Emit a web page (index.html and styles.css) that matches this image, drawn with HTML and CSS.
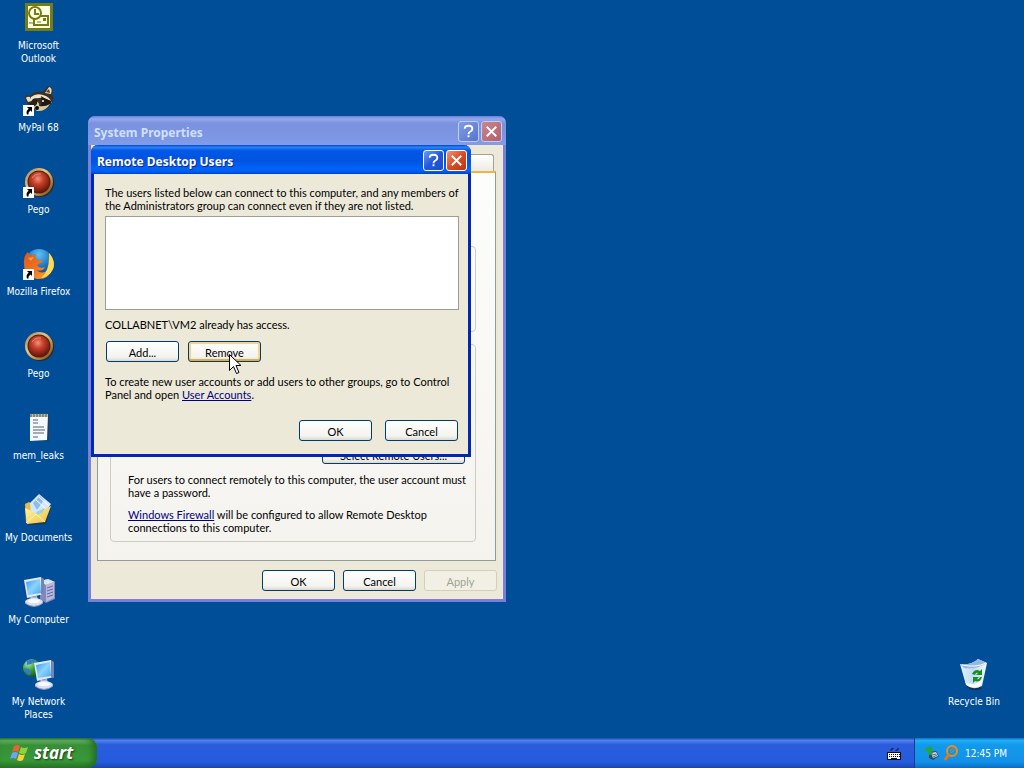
FILE: index.html
```html
<!DOCTYPE html>
<html lang="en">
<head>
<meta charset="utf-8">
<title>Desktop</title>
<link rel="stylesheet" href="styles.css">
</head>
<body>
<svg class="defs" aria-hidden="true">
  <defs>
    <radialGradient id="gem" cx=".45" cy=".35" r=".65"><stop offset="0" stop-color="#f0917a"/><stop offset=".4" stop-color="#c8412c"/><stop offset="1" stop-color="#681508"/></radialGradient>
    <linearGradient id="ring" x1="0" y1="0" x2="1" y2="1"><stop offset="0" stop-color="#9a8058"/><stop offset=".4" stop-color="#e8c885"/><stop offset=".7" stop-color="#b88848"/><stop offset="1" stop-color="#54381c"/></linearGradient>
    <linearGradient id="screen" x1="0" y1="0" x2="1" y2="1"><stop offset="0" stop-color="#3d94ee"/><stop offset=".5" stop-color="#8ad4fc"/><stop offset="1" stop-color="#48a4ee"/></linearGradient>
    <linearGradient id="fox" x1="0" y1="0" x2="1" y2="1"><stop offset="0" stop-color="#e0541c"/><stop offset=".5" stop-color="#ee7420"/><stop offset="1" stop-color="#ffb028"/></linearGradient>
    <radialGradient id="globe" cx=".5" cy=".2" r=".8"><stop offset="0" stop-color="#5cc4f0"/><stop offset=".6" stop-color="#1c6cc0"/><stop offset="1" stop-color="#123c88"/></radialGradient>
    <radialGradient id="earth" cx=".3" cy=".25" r=".8"><stop offset="0" stop-color="#a4e8b0"/><stop offset=".5" stop-color="#38a038"/><stop offset="1" stop-color="#145018"/></radialGradient>
    <linearGradient id="folder" x1="0" y1="0" x2="1" y2="1"><stop offset="0" stop-color="#fff4a8"/><stop offset="1" stop-color="#ecc040"/></linearGradient>
    <linearGradient id="bin" x1="0" y1="0" x2="1" y2="0"><stop offset="0" stop-color="#e4f2fa"/><stop offset=".5" stop-color="#c0dcf2"/><stop offset="1" stop-color="#f4fafe"/></linearGradient>
    <g id="shortcut"><path d="M0 21h11v11H0z" fill="#fff"/><path d="M4 23h5v5L7.500 26.500Q5 28 5.500 30.500L4 30.500Q2.500 27 5.700 24.700z" fill="#000"/></g>
    <g id="pego"><circle cx="17" cy="17" r="14" fill="#302818"/><circle cx="16" cy="16" r="14" fill="url(#ring)"/><circle cx="16" cy="16" r="11.500" fill="#542010"/><circle cx="16" cy="16" r="10.500" fill="url(#gem)"/><path d="M9 12Q12 7 18 8" fill="none" stroke="#f8b8a0" stroke-opacity=".6"/></g>
    <g id="monitor"><path d="M1 3L18 0L21 17L4 21z" fill="#e4e8f4"/><path d="M18 0L21 2V18L18 17z" fill="#7284b8"/><path d="M3 5L17 2L18 16L5 18z" fill="url(#screen)"/><path d="M7 20l7-1 1 4-6 1z" fill="#b0b8cc"/><ellipse cx="11" cy="25" rx="9" ry="4" fill="#dce0ec"/><ellipse cx="11" cy="24" rx="6" ry="2" fill="#f8faff"/><path d="M2 26q9 7 18 0" fill="none" stroke="#9298c0"/></g>
  </defs>
</svg>

<main class="desktop">
  <nav class="shortcuts" aria-label="Desktop icons">
    <a class="shortcut" href="#"><svg viewBox="0 0 32 32"><path d="M2 1h28v28H2z" fill="#767c10"/><path d="M5 4h22v22H5z" fill="#fffee6"/><path d="M11 14h14v9H11z" fill="#fffee6" stroke="#767c10" stroke-width="2"/><circle cx="12" cy="11" r="6" fill="#fffee6" stroke="#767c10" stroke-width="2"/><path d="M12 7v5h4" fill="none" stroke="#767c10" stroke-width="2"/><path d="M20 16h3v3h-3z" fill="#767c10"/><path d="M14 20h4M6 21h4" stroke="#767c10" stroke-width="1"/></svg><span>Microsoft<br>Outlook</span></a>
    <a class="shortcut" href="#"><svg viewBox="0 0 32 32"><path d="M2 14Q2 10 7 12Q12 6 20 8L25 2Q31 2 29 10Q32 15 28 20Q21 29 12 26Q4 22 2 14z" fill="#3c3024"/><path d="M3 14Q4 12 7 13L9 17L5 18zM22 9L26 3Q30 4 28 10z" fill="#e4ddc4"/><path d="M23 8l3-3 1 4z" fill="#54402c"/><path d="M8 13Q14 8 23 12Q28 15 29 19Q23 13 16 14Q11 14 8 19z" fill="#ece5cc"/><path d="M18 12Q23 16 29 17Q25 24 16 24Q20 19 18 12z" fill="#201812"/><path d="M12 17Q17 18 16 22Q22 23 27 20Q22 28 14 27Q9 24 12 17z" fill="#d9c69c"/><path d="M10 15Q15 12 14 20Q10 25 6 20z" fill="#28201a"/><circle cx="14" cy="24" r="2" fill="#080808"/><circle cx="20" cy="17" r="1" fill="#fff"/><use href="#shortcut"/></svg><span>MyPal 68</span></a>
    <a class="shortcut" href="#"><svg viewBox="0 0 32 32"><use href="#pego"/><use href="#shortcut"/></svg><span>Pego</span></a>
    <a class="shortcut" href="#"><svg viewBox="0 0 32 32"><circle cx="16" cy="15" r="14" fill="url(#globe)"/><path d="M26 5Q33 13 30 21Q25 32 14 31Q1 28 1 16Q0 8 5 4L7 8L13 6Q11 10 15 12Q20 12 19 14L14 17Q16 21 22 19Q20 24 13 22Q21 28 26 20Q29 13 26 5z" fill="url(#fox)"/><path d="M26 5Q33 13 30 21Q26 29 18 30Q27 23 26 5z" fill="#ffdc50"/><path d="M5 10l6-1-3 4z" fill="#f8a03c"/><use href="#shortcut"/></svg><span>Mozilla Firefox</span></a>
    <a class="shortcut" href="#"><svg viewBox="0 0 32 32"><use href="#pego"/></svg><span>Pego</span></a>
    <a class="shortcut" href="#"><svg viewBox="0 0 32 32"><path d="M8 4l18-1v26H8z" fill="#203c64"/><path d="M7 3h18l-1 25-17 1z" fill="#f6f9fc"/><path d="M7 2h18v3H7z" fill="#b8bfae"/><path d="M8 1v4m3-4v4m3-4v4m3-4v4m3-4v4m3-4v4" stroke="#56563c"/><path d="M10 8h5m-5 3h5m-5 4h11m-11 3h12m-12 3h11m-11 4h5" stroke="#506078"/></svg><span>mem_leaks</span></a>
    <a class="shortcut" href="#"><svg viewBox="0 0 32 32"><path d="M3 11l4-2 4 2 17 2-5 17-18 1z" fill="#23374b"/><path d="M2 10l4-2 3 2 14 3v12L3 29z" fill="#e6bc48"/><path d="M7 9l9-9 12 10-9 13-11-3z" fill="#d4e8fc"/><path d="M10 9l7-7 4 4-7 10z" fill="#8cbcf0"/><path d="M16 3l9 8M13 6l10 9" stroke="#fff"/><path d="M2 14l11 5 15-7-6 16-18 2z" fill="url(#folder)"/><path d="M13 18l9-4-3 5-5 2z" fill="#9cd4da"/><path d="M3 29l10-9 9 8" fill="none" stroke="#fff2ac"/></svg><span>My Documents</span></a>
    <a class="shortcut" href="#"><svg viewBox="0 0 32 32"><path d="M17 5l8-2 7 3v17l-9 4-6-4z" fill="#8488b8"/><path d="M17 5l8-2 7 3-9 3z" fill="#dce2f2"/><path d="M23 9l8-3v16l-8 4z" fill="#b4b8dc"/><path d="M24 12l6-2m-6 5l6-2m-6 5l6-2m-6 5l6-2" stroke="#686ca0"/><use href="#monitor" y="1"/></svg><span>My Computer</span></a>
    <a class="shortcut" href="#"><svg viewBox="0 0 32 32"><circle cx="9" cy="10" r="9" fill="url(#earth)"/><path d="M4 3q6-3 9 0l-5 3-4 1zM1 10l5 1 2 5-3 1z" fill="#3878d0"/><use href="#monitor" x="10" y="2"/></svg><span>My Network<br>Places</span></a>
  </nav>

  <a class="shortcut recycle" href="#"><svg viewBox="0 0 32 32"><path d="M4 8l24-2-5 25q-9 3-14-2z" fill="#123058"/><path d="M2 6Q12 8 20 1l9 4-5 23q-9 5-16-1z" fill="url(#bin)"/><path d="M2 6Q12 8 20 1l9 4Q18 12 6 10z" fill="#92b9e4"/><path d="M4 7Q18 10 28 5" fill="none" stroke="#fff"/><path d="M7 24q8 5 17-2l-1 5q-8 5-14 0z" fill="#fff"/><path d="M14 16q3-6 8-3l2-2v6h-6l2-2q-2-1-3 2zM24 19q-2 6-7 4l-2 2v-6h6l-2 2q2 1 3-2z" fill="#189020"/></svg><span>Recycle Bin</span></a>

  <section class="window inactive properties" aria-label="System Properties">
    <header class="titlebar"><h1>System Properties</h1>
      <button class="caption" aria-label="Help"><svg viewBox="0 0 20 20"><path d="M6 7q0-3 4-3t4 3q0 2-2 3t-2 3" fill="none" stroke="currentColor" stroke-width="2"/><path d="M9 14h2v2H9z" fill="currentColor"/></svg></button>
      <button class="caption close" aria-label="Close"><svg viewBox="0 0 20 20"><path d="M5 5l10 10M15 5L5 15" stroke="currentColor" stroke-width="2"/></svg></button>
    </header>
    <div class="properties-body">
      <div class="tab-row"></div>
      <div class="tab-page">
        <div class="group assistance"></div>
        <div class="group remote">
          <button class="button select-users">Select Remote Users...</button>
          <p>For users to connect remotely to this computer, the user account must<br>have a password.</p>
          <p><a href="#">Windows Firewall</a> will be configured to allow Remote Desktop<br>connections to this computer.</p>
        </div>
      </div>
      <footer class="actions"><button class="button">OK</button><button class="button">Cancel</button><button class="button" disabled>Apply</button></footer>
    </div>
  </section>

  <section class="window users" role="dialog" aria-label="Remote Desktop Users">
    <header class="titlebar"><h2>Remote Desktop Users</h2>
      <button class="caption" aria-label="Help"><svg viewBox="0 0 20 20"><path d="M6 7q0-3 4-3t4 3q0 2-2 3t-2 3" fill="none" stroke="currentColor" stroke-width="2"/><path d="M9 14h2v2H9z" fill="currentColor"/></svg></button>
      <button class="caption close" aria-label="Close"><svg viewBox="0 0 20 20"><path d="M5 5l10 10M15 5L5 15" stroke="currentColor" stroke-width="2"/></svg></button>
    </header>
    <div class="users-body">
      <p>The users listed below can connect to this computer, and any members of<br>the Administrators group can connect even if they are not listed.</p>
      <div class="user-list" role="listbox" aria-label="Remote desktop users" tabindex="0"></div>
      <p class="access">COLLABNET\VM2 already has access.</p>
      <div class="edit-actions"><button class="button">Add...</button><button class="button hot">Remove</button></div>
      <p>To create new user accounts or add users to other groups, go to Control<br>Panel and open <a href="#">User Accounts</a>.</p>
      <footer class="dialog-actions"><button class="button">OK</button><button class="button">Cancel</button></footer>
    </div>
  </section>
  <svg class="pointer" viewBox="0 0 12 21" aria-hidden="true"><path d="M.500 .500v16l4-4 3 7 2.500-1-3-7h5z" fill="#fff" stroke="#000"/></svg>
</main>

<footer class="taskbar">
  <button class="start"><svg viewBox="0 0 20 20"><path d="M4 3q3-2 6 0L8 9Q5 7 2 9z" fill="#f0602c"/><path d="M11 4q3 2 7 0l-2 6q-3 2-7 0z" fill="#8cd43c"/><path d="M2 10q3-2 6 0l-2 6q-3-2-6 0z" fill="#6ca4fa"/><path d="M9 11q3 2 6 0l-2 6q-3 2-6 0z" fill="#fcd034"/></svg>start</button>
  <div class="language"><svg viewBox="0 0 14 14" aria-label="Keyboard"><path d="M4 4V2h2V1m3 3V3h2V1" fill="none" stroke="#101c48"/><path d="M0 5h14v8H0z" fill="#101010"/><path d="M1 6h12v6H1z" fill="#f4f4f4"/><path d="M2 7.500h11M2 9.500h11" stroke="#101010" stroke-dasharray="1 1"/><path d="M4 11.500h6" stroke="#101010"/></svg></div>
  <div class="tray">
    <svg viewBox="0 0 16 16"><path d="M5 7l7-1 3 5-6 4-4-2z" fill="#34495a"/><path d="M7 8l5-1 2 4-5 2z" fill="#d4e0e8"/><path d="M8 10l4-1M9 12l4-2" stroke="#546880"/><path d="M2 3l5-2 2 4-2 1 2 3-4 1-2-4-3 1z" fill="#24a83c"/></svg>
    <svg viewBox="0 0 16 16"><circle cx="9" cy="6" r="5" fill="none" stroke="#f08a18" stroke-width="2"/><path d="M6 9l-4 6" stroke="#e87808" stroke-width="3"/><path d="M7 6l3-3m-2 5l4-4" stroke="#e87808"/></svg>
    <time>12:45 PM</time>
  </div>
</footer>
</body>
</html>
```
FILE: styles.css
```css
* { box-sizing: border-box; }
body {
  margin: 0;
  min-height: 100vh;
  display: flex;
  flex-direction: column;
  background: #004e98;
  font: 11px/13px Lato, "Liberation Sans", sans-serif;
  color: #000;
}
svg { display: block; flex: none; }
p, h1, h2 { margin: 0; }
button { font: inherit; color: inherit; }
a { color: #000080; }
.defs { position: absolute; width: 0; height: 0; }
.desktop { flex: 1; position: relative; }

.shortcuts { width: 77px; padding-top: 2px; display: grid; grid-auto-rows: 62px; gap: 20px; }
.shortcut {
  display: flex;
  flex-direction: column;
  align-items: center;
  gap: 5px;
  color: #fff;
  text-decoration: none;
  text-align: center;
  white-space: nowrap;
  font: 10px/13px "DejaVu Sans Condensed", "DejaVu Sans", sans-serif;
}
.shortcut svg { width: 32px; height: 32px; }
.recycle { position: absolute; right: 12px; bottom: 30px; width: 76px; }

.window {
  position: absolute;
  display: flex;
  flex-direction: column;
  border-radius: 7px 7px 0 0;
  border: 3px solid #0831d9;
  border-top: 0;
  white-space: nowrap;
}
.titlebar {
  height: 29px;
  display: flex;
  align-items: center;
  gap: 2px;
  padding: 2px 4px 0 6px;
  margin: 0 -3px;
  border-radius: 7px 7px 0 0;
  color: #fff;
  background: linear-gradient(#0048c8, #2c80f8 8%, #0058e6 20%, #0054e0 55%, #0064fa 82%, #005cf4 92%, #0040b8);
}
.titlebar h1, .titlebar h2 {
  flex: 1;
  padding-top: 2px;
  font: bold 12px/16px "Noto Sans", sans-serif;
  text-shadow: 1px 1px #0a2a90;
}
.caption {
  width: 21px;
  height: 21px;
  padding: 0;
  border: 1px solid #fff;
  border-radius: 3px;
  color: #fff;
  background: linear-gradient(135deg, #6c9cf4, #2458dc 50%, #1c4cc8);
}
.caption svg { width: 19px; height: 19px; }
.close { background: linear-gradient(135deg, #f09478, #dc4c24 50%, #b83410); }

.inactive { border-color: #7a80d8; }
.inactive .titlebar {
  color: #d0e0fc;
  background: linear-gradient(#6c80d8, #94a8ec 10%, #7a92e0 25%, #7c94e2 60%, #829cea);
}
.inactive .titlebar h1 { text-shadow: none; }
.inactive .caption { border-color: #c0cdf4; background: linear-gradient(135deg, #809ce8, #5474d0); }
.inactive .close { background: linear-gradient(135deg, #cc8490, #b0606c); }

.button {
  width: 73px;
  height: 21px;
  padding: 1px 0 0;
  border: 1px solid #003c74;
  border-radius: 3px;
  background: linear-gradient(#fff, #f3f3ef 80%, #dcd8cc);
}
.hot { box-shadow: inset 0 -2px #e8ac38, inset 0 0 0 2px #f8d488; }
.button:disabled { color: #a1a192; border-color: #d2cfbb; background: #f2f0e5; }

.properties { left: 88px; top: 116px; width: 418px; }
.properties-body { padding: 9px 6px 8px; background: #ece9d8; }
.tab-row {
  height: 17px;
  margin-right: 3px;
  border: 1px solid #a0a490;
  border-bottom: 0;
  border-radius: 0 3px 0 0;
  background: linear-gradient(#fff, #ecebe4);
}
.tab-page {
  margin-right: 1px;
  padding: 73px 19px 18px 12px;
  border: 1px solid #919b9c;
  border-top: 2px solid #f4b440;
  background: linear-gradient(#fdfdfc, #f4f3ee);
}
.group { border: 1px solid #cdccc0; border-radius: 4px; }
.assistance { height: 86px; margin-bottom: 12px; }
.remote { display: flex; flex-direction: column; gap: 9px; padding: 98px 10px 7px 17px; }
.select-users { width: 143px; padding-top: 4px; align-self: flex-end; }
.actions { display: flex; justify-content: flex-end; gap: 8px; padding-top: 9px; }

.users { left: 91px; top: 145px; width: 380px; border-color: #0028b8; }
.users-body { padding: 12px 9px 13px 11px; background: #ece9d8; }
.user-list { height: 94px; margin: 4px 0 8px; border: 1px solid #9a9f9a; background: #fff; }
.edit-actions { display: flex; gap: 9px; padding: 10px 1px 13px; }
.dialog-actions { display: flex; justify-content: flex-end; gap: 13px; padding: 19px 1px 0; }
.pointer { position: absolute; left: 229px; top: 354px; width: 12px; height: 21px; }

.taskbar {
  height: 30px;
  display: flex;
  align-items: stretch;
  color: #fff;
  background: linear-gradient(#1c44a8, #4c84ec 8%, #2c5cdc 22%, #245cdc 80%, #1c44b0);
}
.start {
  width: 97px;
  display: flex;
  align-items: center;
  gap: 4px;
  padding: 0 0 0 10px;
  border: 0;
  border-radius: 0 9px 9px 0;
  font: italic bold 17px/24px "Open Sans", sans-serif;
  text-shadow: 1px 1px 2px #143c14;
  background: linear-gradient(#2c742c, #68b468 8%, #389038 24%, #389838 75%, #287828);
  box-shadow: inset -4px 0 6px #246c24;
}
.start svg { width: 20px; height: 20px; }
.language { flex: 1; display: flex; justify-content: flex-end; align-items: center; padding: 2px 13px 0 0; }
.language svg { width: 14px; height: 14px; }
.tray {
  width: 110px;
  display: flex;
  align-items: center;
  gap: 3px;
  padding-left: 9px;
  border-left: 1px solid #0c3c94;
  font: 10px/13px "DejaVu Sans Condensed", "DejaVu Sans", sans-serif;
  background: linear-gradient(#0c6cc0, #20b0f8 8%, #129aec 22%, #1290e8 80%, #0c6cc4);
}
.tray svg { width: 16px; height: 16px; }
.tray time { padding-left: 3px; }
```
